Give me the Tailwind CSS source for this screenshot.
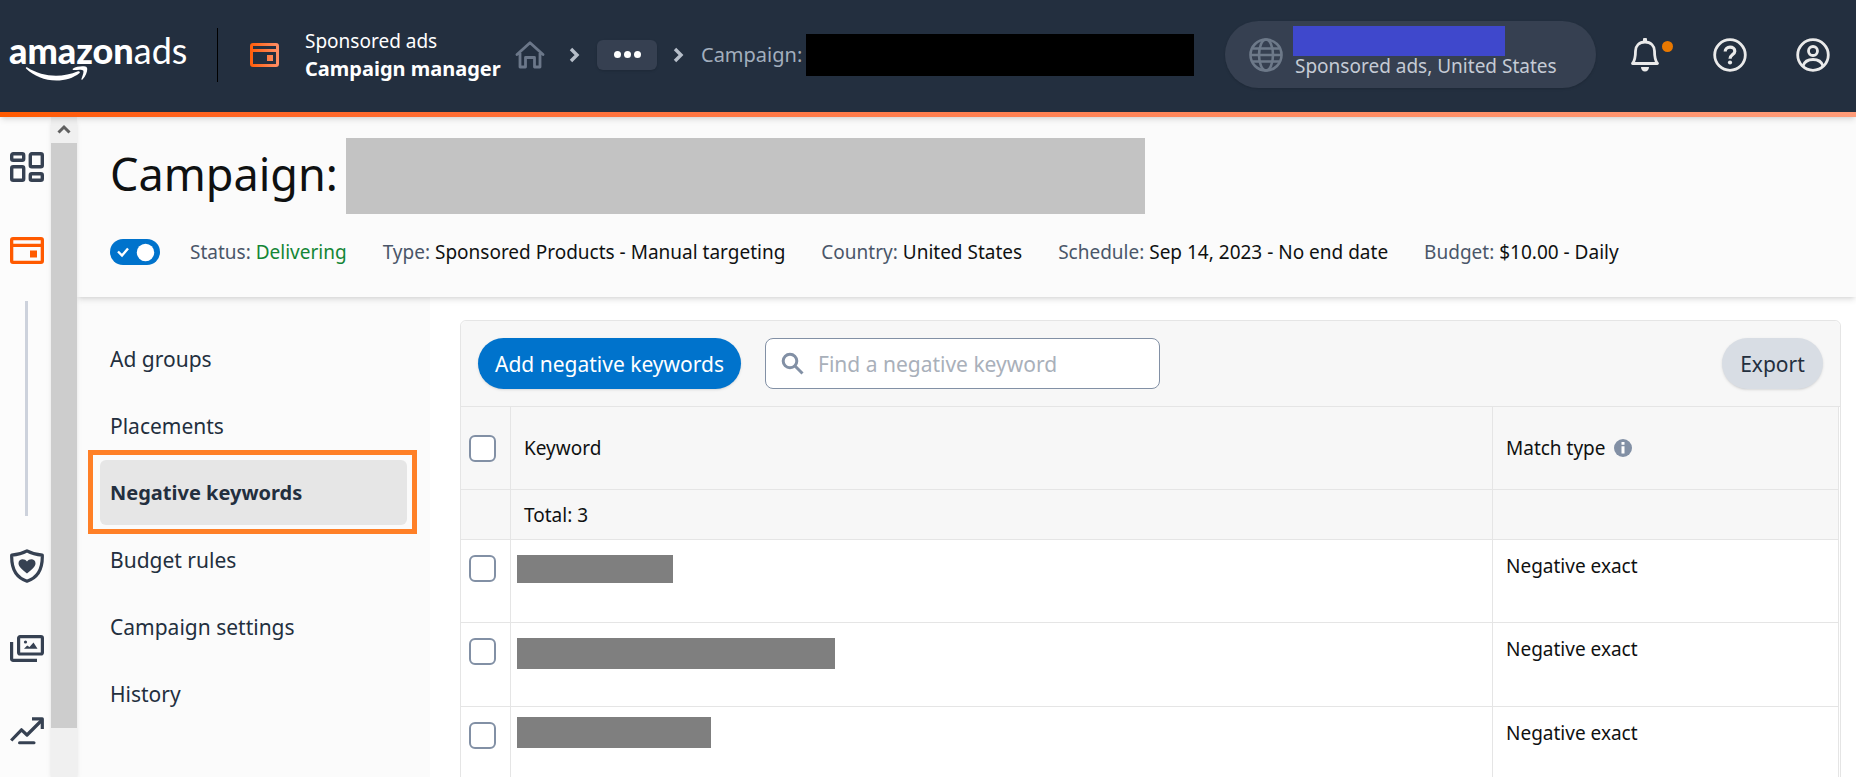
<!DOCTYPE html>
<html lang="en">
<head>
    <meta charset="UTF-8">
    <meta name="viewport" content="width=device-width, initial-scale=1.0">
    <title>Campaign manager - Amazon Ads</title>
    <script src="https://cdn.jsdelivr.net/npm/@tailwindcss/browser@4"></script>
</head>
<body class="h-screen flex flex-col overflow-hidden bg-white font-['Noto_Sans',sans-serif] text-[19px] leading-6 text-[#0f1111]">
    <!-- Header -->
    <header class="relative z-20 shrink-0 shadow-md">
        <div class="h-28 pb-[3px] flex items-center bg-[#232f3f] text-white">
            <a href="#" class="relative ml-[9px] w-[178px] shrink-0 flex font-['Lato',sans-serif] text-[36px] leading-10 pb-[9px]" aria-label="amazon ads">
                <span class="font-black">amazon</span><span class="font-normal">ads</span>
                <svg class="absolute left-4 top-[36px] w-16 h-4" viewBox="0 0 64 16" fill="#fff">
                    <path d="M1 2.600c-.7-.9.4-1.700 1.400-1C11 7 21 9.800 31 9.800c7.500 0 15-1.600 22-4.500 1.500-.6 2.600.9 1.300 2C48.500 12 40 14.600 31.500 14.600 19.500 14.600 8.800 10 1 2.600z"/>
                    <path d="M47.800 2.700C52 .1 60.500-.3 61.800 1.400c1.300 1.700-.3 8.500-4.300 12-.7.600-1.400.2-1.100-.5 1.200-2.800 2.700-7.300 1.800-8.500-.9-1.200-6-.7-9.500-.3-.9.100-1.400-.8-.9-1.400z"/>
                </svg>
            </a>
            <div class="ml-[30px] w-px h-[54px] bg-black"></div>
            <svg class="ml-8 w-[29px] h-6 shrink-0" viewBox="0 0 29 24" fill="none">
                <defs>
                    <linearGradient id="card" x1="0" y1="0" x2="1" y2="0">
                        <stop offset="0" stop-color="#ff5d0a"/>
                        <stop offset="1" stop-color="#ff9068"/>
                    </linearGradient>
                </defs>
                <path fill="url(#card)" fill-rule="evenodd" d="M3 0h23a3 3 0 0 1 3 3v18a3 3 0 0 1-3 3H3a3 3 0 0 1-3-3V3a3 3 0 0 1 3-3zM3 3v3h23V3zM3 9v12h23V9zM17 12h6v6h-6z"/>
            </svg>
            <div class="ml-[26px] w-[210px] shrink-0 leading-7 whitespace-nowrap">
                <p>Sponsored ads</p>
                <p class="text-[20px] leading-7 font-bold">Campaign manager</p>
            </div>

            <!-- Breadcrumb -->
            <nav class="flex items-center shrink-0 text-[20px] text-[#a2aebd]" aria-label="Breadcrumb">
                <a href="#" aria-label="Home">
                    <svg class="w-[30px] h-7" viewBox="0 0 30 28" fill="none" stroke="#6b7789" stroke-width="2.800" stroke-linejoin="round" stroke-linecap="round">
                        <path d="M2 13.500L15 1.800l13 11.700M5 12v14h5.500v-9.500h9V26H25V12"/>
                    </svg>
                </a>
                <svg class="ml-6 w-[11px] h-4" viewBox="0 0 11 16" fill="none" stroke="#b6bec9" stroke-width="3.400"><path d="M2 2l6 6-6 6"/></svg>
                <button type="button" class="ml-[17px] w-[60px] h-[30px] flex items-center justify-center gap-[3px] rounded-md bg-[#364051] shadow-sm" aria-label="More">
                    <span class="size-[7px] rounded-full bg-white"></span>
                    <span class="size-[7px] rounded-full bg-white"></span>
                    <span class="size-[7px] rounded-full bg-white"></span>
                </button>
                <svg class="ml-4 w-[11px] h-4" viewBox="0 0 11 16" fill="none" stroke="#b6bec9" stroke-width="3.400"><path d="M2 2l6 6-6 6"/></svg>
                <span class="ml-[17px] w-[105px] whitespace-nowrap">Campaign:</span>
                <span class="w-[388px] h-[42px] bg-black"></span>
            </nav>

            <!-- Account -->
            <button type="button" class="ml-auto w-[371px] h-[67px] flex items-center rounded-full bg-[#364051] pl-6 text-left shadow-sm shrink-0">
                <svg class="w-[34px] h-[34px]" viewBox="0 0 34 34" fill="none" stroke="#6d7989" stroke-width="2.600">
                    <circle cx="17" cy="17" r="15.500"/>
                    <ellipse cx="17" cy="17" rx="7" ry="15.500"/>
                    <path d="M4 10.500h26M1.500 17h31M4 23.500h26"/>
                </svg>
                <span class="ml-2.5 flex flex-col text-[#c5cbd5] whitespace-nowrap">
                    <span class="w-[212px] h-[30px] bg-[#3f48cc]"></span>
                    <span class="pl-0.5 leading-5 pb-2">Sponsored ads, United States</span>
                </span>
            </button>
            <div class="ml-[34px] mr-[26px] flex items-center shrink-0">
                <button type="button" class="relative w-[30px]" aria-label="Notifications">
                    <svg class="w-[30px] h-[34px]" viewBox="0 0 30 34" fill="none">
                        <path stroke="#eaeaea" stroke-width="2.800" stroke-linejoin="round" d="M2.500 25.500C5 22.500 5.500 20 5.500 13c0-5 3.500-9 9.500-9s9.500 4 9.500 9c0 7 .5 9.500 3 12.500z"/>
                        <path fill="#eaeaea" d="M13 1.500a2 2 0 0 1 4 0V4h-4zM11 29h8c0 2.500-1.600 4.500-4 4.500S11 31.500 11 29z"/>
                    </svg>
                    <span class="absolute left-8 top-[3px] size-[11px] rounded-full bg-[#e87800]"></span>
                </button>
                <button type="button" class="ml-[53px]" aria-label="Help">
                    <svg class="w-[34px] h-[34px]" viewBox="0 0 34 34" fill="none" stroke="#eaeaea" stroke-width="3.200">
                        <circle cx="17" cy="17" r="15.300" stroke-width="2.800"/>
                        <path d="M12.200 13.500c0-2.700 2-4.300 4.800-4.300s4.800 1.600 4.800 4c0 3.300-4.800 3.300-4.800 7.600"/>
                        <circle cx="17" cy="24.500" r="2.100" fill="#eaeaea" stroke="none"/>
                    </svg>
                </button>
                <button type="button" class="ml-[49px]" aria-label="Account">
                    <svg class="w-[34px] h-[34px]" viewBox="0 0 34 34" fill="none" stroke="#eaeaea" stroke-width="2.800">
                        <circle cx="17" cy="17" r="15.300"/>
                        <circle cx="17" cy="13" r="4.500"/>
                        <path d="M7 28c1.500-4.500 5.500-6.500 10-6.500s8.500 2 10 6.500"/>
                    </svg>
                </button>
            </div>
        </div>
        <div class="h-[5px] bg-linear-to-r from-[#ff5a00] to-[#ff9b78]"></div>
    </header>

    <div class="flex-1 min-h-0 flex">
        <!-- Icon rail -->
        <aside class="w-[51px] shrink-0 flex flex-col items-center bg-[#fcfcfc] pl-[3px] pt-[34px]">
            <a href="#" aria-label="Dashboard">
                <svg class="w-[34px] h-8" viewBox="0 0 34 32" fill="none" stroke="#364152" stroke-width="3.400">
                    <rect x="1.700" y="2.700" width="12" height="6.600" rx="1.500"/>
                    <rect x="20.300" y="2.700" width="12" height="13" rx="1.500"/>
                    <rect x="1.700" y="15.700" width="12" height="13.600" rx="1.500"/>
                    <rect x="20.300" y="22.700" width="12" height="6.600" rx="1.500"/>
                </svg>
            </a>
            <a href="#" class="mt-[54px]" aria-label="Campaigns">
                <svg class="w-[34px] h-[27px]" viewBox="0 0 34 27">
                    <path fill="#ff5a00" fill-rule="evenodd" d="M3 0h28a3 3 0 0 1 3 3v21a3 3 0 0 1-3 3H3a3 3 0 0 1-3-3V3a3 3 0 0 1 3-3zM3.300 3.300v3.400h27.400V3.300zM3.300 10v13.700h27.400V10zM20 13.500h7v7h-7z"/>
                </svg>
            </a>
            <div class="mt-[37px] mr-px w-[3px] h-[215px] bg-[#cdd2dc]"></div>
            <a href="#" class="mt-[33px]" aria-label="Brand safety">
                <svg class="w-[34px] h-[34px]" viewBox="0 0 34 34" fill="none">
                    <path stroke="#364152" stroke-width="3.200" stroke-linejoin="round" d="M17 1.800c4.500 2.400 9.500 3.800 15.300 4.400.4 13-3.800 22.300-15.300 26C5.500 28.500 1.300 19.200 1.700 6.200 7.500 5.600 12.500 4.200 17 1.800z"/>
                    <path fill="#364152" d="M17 24.500c-4-3.500-8.500-6.500-8.500-10.300 0-4.400 6-5.400 8.500-1.700 2.500-3.700 8.500-2.700 8.500 1.700 0 3.800-4.500 6.800-8.500 10.300z"/>
                </svg>
            </a>
            <a href="#" class="mt-[52px]" aria-label="Creatives">
                <svg class="w-[34px] h-[27px]" viewBox="0 0 34 27" fill="none" stroke="#364152" stroke-width="3.200">
                    <rect x="8.600" y="1.600" width="23.800" height="17.400" rx="1.500"/>
                    <path d="M1.600 7v16.900a1.500 1.500 0 0 0 1.500 1.500H27"/>
                    <path fill="#364152" stroke="none" d="M14 13.800l3.200-3.300 2.300 1.500L23.500 7.500l4 6.300z"/>
                    <circle cx="15.500" cy="7" r="1.600" fill="#364152" stroke="none"/>
                </svg>
            </a>
            <a href="#" class="mt-[55px]" aria-label="Reports">
                <svg class="w-[34px] h-7" viewBox="0 0 34 28" fill="none" stroke="#364152" stroke-width="3.200">
                    <path d="M1.200 23.500L11.500 12.800l5.500 5.200L31.500 3.500" stroke-linejoin="round"/>
                    <path d="M22 1.800h10.300V12" stroke-linejoin="round"/>
                    <path d="M9.500 25.800h14.500" stroke-linecap="round" stroke-width="3"/>
                </svg>
            </a>
        </aside>

        <!-- Rail scrollbar -->
        <div class="relative z-10 w-[26px] shrink-0 flex flex-col bg-[#f0f0f0] shadow-md">
            <svg class="w-[26px] h-[26px] shrink-0" viewBox="0 0 26 26" fill="none" stroke="#606060" stroke-width="3"><path d="M7.500 15.500L13 10l5.500 5.500"/></svg>
            <div class="h-[585px] bg-[#cdcdcd]"></div>
        </div>

        <div class="flex-1 min-w-0 flex flex-col">
            <!-- Campaign summary -->
            <section class="h-[180px] shrink-0 bg-[#fbfbfb] pl-[33px] pt-[21px] shadow-md z-[5]">
                <div class="flex items-start">
                    <h1 class="w-[236px] shrink-0 text-[45px] leading-[72px] whitespace-nowrap">Campaign:</h1>
                    <span class="w-[799px] h-[76px] bg-[#c3c3c3]"></span>
                </div>
                <div class="mt-[25px] flex items-center gap-[30px] whitespace-nowrap">
                    <label class="relative w-[50px] h-[26px]">
                        <input type="checkbox" checked aria-label="Campaign active" class="block appearance-none w-[50px] h-[26px] rounded-full bg-[#0073cc]">
                        <svg class="absolute inset-0 w-[50px] h-[26px]" viewBox="0 0 50 26" fill="none">
                            <path d="M8 12.500l4 4 6-7" stroke="#fff" stroke-width="2.400"/>
                            <circle cx="35.500" cy="13.500" r="8.700" fill="#fff"/>
                        </svg>
                    </label>
                    <div class="flex gap-9">
                        <p><span class="text-[#4a5669]">Status:</span> <span class="text-[#138636]">Delivering</span></p>
                        <p><span class="text-[#4a5669]">Type:</span> Sponsored Products - Manual targeting</p>
                        <p><span class="text-[#4a5669]">Country:</span> United States</p>
                        <p><span class="text-[#4a5669]">Schedule:</span> Sep 14, 2023 - No end date</p>
                        <p><span class="text-[#4a5669]">Budget:</span> $10.00 - Daily</p>
                    </div>
                </div>
            </section>

            <div class="flex-1 min-h-0 flex">
                <!-- Campaign nav -->
                <nav class="w-[353px] shrink-0 bg-[#fbfbfb] pt-[29px] px-[23px] flex flex-col gap-0.5 text-[21px] text-[#232f3e]" aria-label="Campaign">
                    <a href="#" class="h-[65px] px-2.5 flex items-center">Ad groups</a>
                    <a href="#" class="h-[65px] px-2.5 flex items-center">Placements</a>
                    <a href="#" class="relative h-[65px] px-2.5 flex items-center rounded-md bg-[#e6e6e6] text-[20px] font-bold" aria-current="page">
                        Negative keywords
                        <span class="absolute -left-3 -right-2.5 -top-2.5 -bottom-[9px] border-[5px] border-[#ff8027]"></span>
                    </a>
                    <a href="#" class="h-[65px] px-2.5 flex items-center">Budget rules</a>
                    <a href="#" class="h-[65px] px-2.5 flex items-center">Campaign settings</a>
                    <a href="#" class="h-[65px] px-2.5 flex items-center">History</a>
                </nav>

                <!-- Negative keywords -->
                <main class="flex-1 min-w-0 pt-[23px] pl-[30px] pr-[15px]">
                    <div class="border border-[#e5e5e5] rounded-t-md">
                        <div class="h-[86px] flex items-center bg-[#f7f7f7] rounded-t-md border-b border-[#e5e5e5] px-[17px] text-[21px]">
                            <button type="button" class="w-[263px] h-[51px] rounded-full bg-[#0073cc] text-white whitespace-nowrap shadow">Add negative keywords</button>
                            <div class="relative ml-6 w-[395px]">
                                <svg class="absolute left-4 top-[14px] w-6 h-6" viewBox="0 0 24 24" fill="none" stroke="#8290a5" stroke-width="3">
                                    <circle cx="9" cy="9" r="6.800"/>
                                    <path d="M14 14l7.500 7.500"/>
                                </svg>
                                <input type="search" aria-label="Find a negative keyword" placeholder="Find a negative keyword" class="block w-full h-[51px] pl-[52px] pr-4 bg-white border border-[#8290a5] rounded-lg placeholder:text-[#a9b0ba]">
                            </div>
                            <button type="button" class="ml-auto w-[101px] h-[51px] rounded-full bg-[#d8dde4] text-[#232f3e] shadow">Export</button>
                        </div>
                        <div class="pr-px">
                            <table class="w-full table-fixed border-separate border-spacing-0 text-left border-r border-[#e5e5e5]">
                                <colgroup>
                                    <col class="w-[50px]">
                                    <col>
                                    <col class="w-[345px]">
                                </colgroup>
                                <thead class="bg-[#f7f7f7]">
                                    <tr class="h-[83px]">
                                        <th class="border-r border-b border-[#e5e5e5] pl-2"><input type="checkbox" aria-label="Select all" class="block appearance-none size-[27px] border-2 border-[#8290a5] rounded-md bg-white"></th>
                                        <th class="border-r border-b border-[#e5e5e5] pl-[13px] font-normal">Keyword</th>
                                        <th class="border-b border-[#e5e5e5] pl-[13px] font-normal">
                                            <span class="flex items-center gap-2">Match type
                                                <svg class="w-[18px] h-[18px]" viewBox="0 0 18 18">
                                                    <circle cx="9" cy="9" r="9" fill="#8290a5"/>
                                                    <path fill="#fff" d="M7.500 7.300h3V14.500h-3zM7.500 3h3v2.800h-3z"/>
                                                </svg>
                                            </span>
                                        </th>
                                    </tr>
                                    <tr class="h-[50px]">
                                        <td class="border-r border-b border-[#e5e5e5]"></td>
                                        <td class="border-r border-b border-[#e5e5e5] pl-[13px]">Total: 3</td>
                                        <td class="border-b border-[#e5e5e5]"></td>
                                    </tr>
                                </thead>
                                <tbody class="align-top">
                                    <tr class="h-[83px]">
                                        <td class="border-r border-b border-[#e5e5e5] pl-2 pt-[15px]"><input type="checkbox" aria-label="Select keyword 1" class="block appearance-none size-[27px] border-2 border-[#8290a5] rounded-md bg-white"></td>
                                        <td class="border-r border-b border-[#e5e5e5] pl-1.5 pt-[15px]"><div class="w-[156px] h-7 bg-[#7f7f7f]"></div></td>
                                        <td class="border-b border-[#e5e5e5] pl-[13px] pt-3.5">Negative exact</td>
                                    </tr>
                                    <tr class="h-[84px]">
                                        <td class="border-r border-b border-[#e5e5e5] pl-2 pt-[15px]"><input type="checkbox" aria-label="Select keyword 2" class="block appearance-none size-[27px] border-2 border-[#8290a5] rounded-md bg-white"></td>
                                        <td class="border-r border-b border-[#e5e5e5] pl-1.5 pt-[15px]"><div class="w-[318px] h-[31px] bg-[#7f7f7f]"></div></td>
                                        <td class="border-b border-[#e5e5e5] pl-[13px] pt-3.5">Negative exact</td>
                                    </tr>
                                    <tr class="h-[84px]">
                                        <td class="border-r border-b border-[#e5e5e5] pl-2 pt-[15px]"><input type="checkbox" aria-label="Select keyword 3" class="block appearance-none size-[27px] border-2 border-[#8290a5] rounded-md bg-white"></td>
                                        <td class="border-r border-b border-[#e5e5e5] pl-1.5 pt-2.5"><div class="w-[194px] h-[31px] bg-[#7f7f7f]"></div></td>
                                        <td class="border-b border-[#e5e5e5] pl-[13px] pt-3.5">Negative exact</td>
                                    </tr>
                                </tbody>
                            </table>
                        </div>
                    </div>
                </main>
            </div>
        </div>
    </div>
</body>
</html>
